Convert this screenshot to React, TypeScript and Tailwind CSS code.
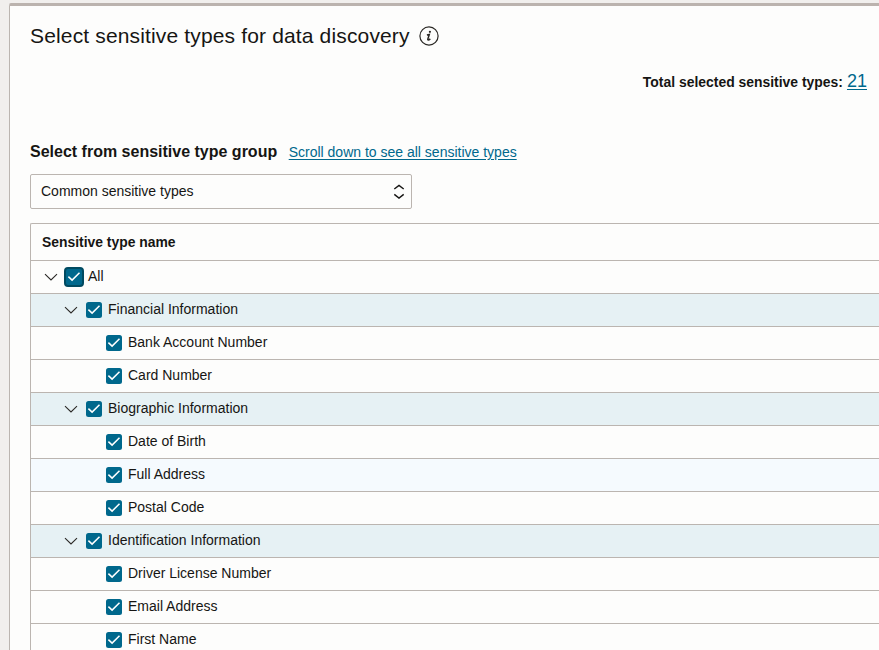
type Row = { name: string; level: 0 | 1 | 2; hovered?: boolean };

const rows: Row[] = [
  { name: 'All', level: 0 },
  { name: 'Financial Information', level: 1 },
  { name: 'Bank Account Number', level: 2 },
  { name: 'Card Number', level: 2 },
  { name: 'Biographic Information', level: 1 },
  { name: 'Date of Birth', level: 2 },
  { name: 'Full Address', level: 2, hovered: true },
  { name: 'Postal Code', level: 2 },
  { name: 'Identification Information', level: 1 },
  { name: 'Driver License Number', level: 2 },
  { name: 'Email Address', level: 2 },
  { name: 'First Name', level: 2 },
];

const indent = ['pl-[13px]', 'pl-[33px]', 'pl-[75px]'];

function InfoIcon() {
  return (
    <svg className="mt-[26px] ml-[9px] size-5 shrink-0" viewBox="0 0 20 20" fill="none">
      <circle cx="10" cy="10" r="9.1" stroke="#2b2926" strokeWidth="1.2" />
      <circle cx="10.9" cy="5.8" r="1.1" fill="#2b2926" />
      <path d="M7.9 8.9l2.4-.5-1.5 4.9c-.2.9.7 1.1 2.5-.4" stroke="#2b2926" strokeWidth="1.5" />
    </svg>
  );
}

function Caret() {
  return (
    <svg className="-mt-px h-2 w-[14px] shrink-0" viewBox="0 0 14 8" fill="none">
      <path d="M1 1.2l6 5.8 6-5.8" stroke="#2b2926" strokeWidth="1.1" />
    </svg>
  );
}

function Checkbox({ focused }: { focused?: boolean }) {
  return (
    <span
      className={
        focused
          ? 'ml-[6px] flex size-5 shrink-0 items-center justify-center rounded-[4px] border-2 border-[#004a60] bg-[#00688c]'
          : 'flex size-4 shrink-0 items-center justify-center rounded-[2.5px] bg-[#00688c]'
      }
    >
      <svg className="size-4 shrink-0" viewBox="0 0 16 16" fill="none">
        <path d="M2.4 7.6l3.7 3.5 7.4-7.4" stroke="#fff" strokeWidth="1.5" />
      </svg>
    </span>
  );
}

function TreeRow({ row }: { row: Row }) {
  const bg = row.level === 1 ? 'bg-[#e6f1f4]' : row.hovered ? 'bg-[#f5fafe]' : '';
  return (
    <div className={`flex h-[33px] shrink-0 items-center border-b border-[#bbb5b0] ${indent[row.level]} ${bg}`}>
      {row.level < 2 && <Caret />}
      <div className={row.level === 1 ? 'ml-2 flex items-center' : 'flex items-center'}>
        <Checkbox focused={row.level === 0} />
        <span className={`mb-[2px] text-[14px] leading-4 whitespace-nowrap ${row.level === 0 ? 'ml-1' : 'ml-1.5'}`}>
          {row.name}
        </span>
      </div>
    </div>
  );
}

export default function App() {
  return (
    <div className="h-[650px] w-[879px] overflow-hidden bg-[#f1efed] pt-[3px] pl-[9px] font-['Liberation_Sans',Arial,sans-serif] text-[#161513]">
      <main className="flex h-[647px] flex-col rounded-tl-[2px] border-t-[3px] border-l border-t-[#bbb3ae] border-l-[#bbb5b0] bg-[#fdfdfc] pl-5">
        <header className="-mt-[6px] flex h-[64px] shrink-0">
          <h1 className="mt-[24px] text-[21px] leading-6 tracking-[0.15px] whitespace-nowrap">
            Select sensitive types for data discovery
          </h1>
          <InfoIcon />
        </header>
        <div className="flex h-[28px] shrink-0 items-baseline justify-end pt-[7px] pr-3 whitespace-nowrap">
          <b className="text-[13.93px] leading-5">Total selected sensitive types:</b>
          <a className="ml-1 text-[18px] leading-5 text-[#00688c] underline underline-offset-2">21</a>
        </div>
        <div className="mt-[50px] flex h-5 shrink-0 items-baseline whitespace-nowrap">
          <h2 className="text-[16px] leading-5 font-bold">Select from sensitive type group</h2>
          <a className="ml-[11.5px] text-[14px] leading-5 text-[#00688c] underline underline-offset-2">
            Scroll down to see all sensitive types
          </a>
        </div>
        <div className="mt-3 flex h-[35px] w-[382px] shrink-0 items-center justify-between rounded-[2px] border border-[#bbb5b0] pr-1.5 pl-2.5">
          <span className="mb-px text-[14px] leading-4">Common sensitive types</span>
          <svg className="h-4 w-3" viewBox="0 0 12 16" fill="none" stroke="#161513" strokeWidth="1.4">
            <path d="M1.3 5L6 1.4 10.7 5M1.3 10.4L6 14l4.7-3.6" />
          </svg>
        </div>
        <section className="mt-[14px] flex min-h-0 flex-1 flex-col overflow-hidden rounded-tl-[2px] border-t border-l border-[#bbb5b0]">
          <div className="flex h-[37px] shrink-0 items-center border-b border-[#bbb5b0] pl-[11px] text-[13.9px] font-bold">
            Sensitive type name
          </div>
          {rows.map((row) => (
            <TreeRow key={row.name} row={row} />
          ))}
        </section>
      </main>
    </div>
  );
}
